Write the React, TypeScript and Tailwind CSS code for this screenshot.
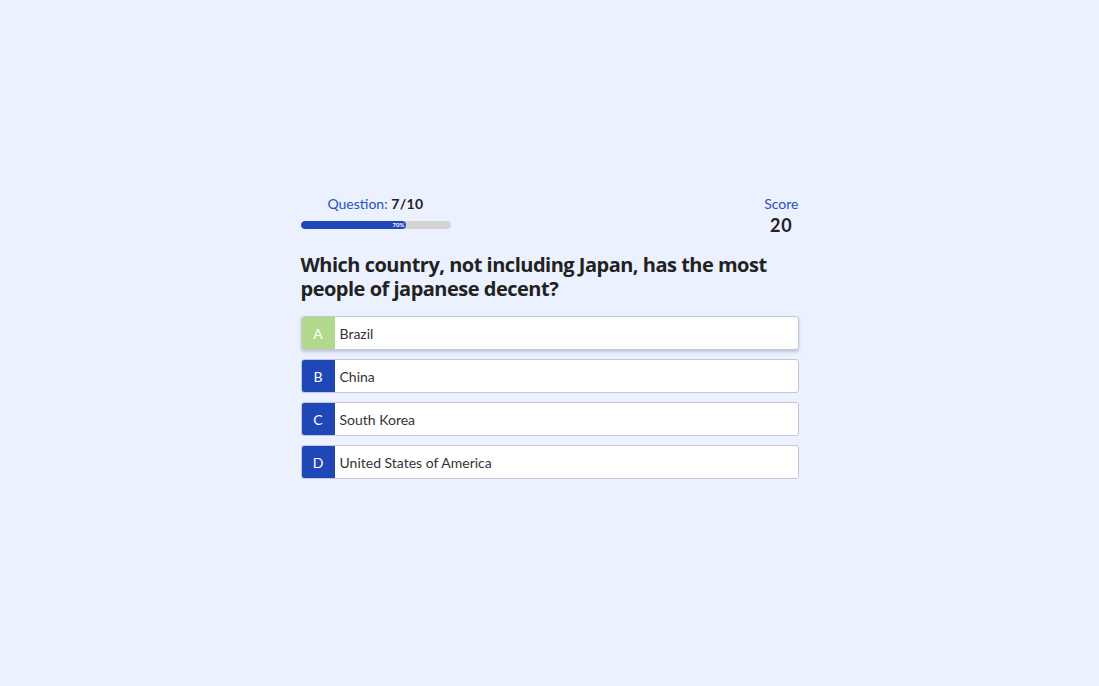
import React from 'react';

const options = [
  { letter: 'A', label: 'Brazil', selected: true },
  { letter: 'B', label: 'China', selected: false },
  { letter: 'C', label: 'South Korea', selected: false },
  { letter: 'D', label: 'United States of America', selected: false },
];

export default function App() {
  const progress = 70;
  return (
    <div
      className="min-h-screen w-full bg-[#ebf1fe] flex justify-center"
      style={{ fontFamily: 'Lato, "Open Sans", "Noto Sans", sans-serif' }}
    >
      <div className="w-[498px] pt-[195px]">
        {/* header */}
        <div className="flex justify-between items-start">
          <div className="w-[150px]">
            <p className="text-center text-[14px] leading-[18px] text-[#2a4fc0]">
              Question: <span className="font-bold text-[#222] tracking-wide">7/10</span>
            </p>
            <div className="mt-[8px] h-[8px] w-[150px] rounded-full bg-[#d4d4d4] overflow-hidden">
              <div
                className="h-full rounded-full bg-[#1f47b8] flex items-center justify-end pr-[1px]"
                style={{ width: `${progress}%` }}
              >
                <span className="text-[6px] leading-none font-bold text-white">{progress}%</span>
              </div>
            </div>
          </div>
          <div className="flex flex-col items-center">
            <p className="text-[14px] leading-[18px] text-[#2a4fc0]">Score</p>
            <p className="mt-[2px] text-[18px] leading-[20px] font-bold text-[#222] tracking-wider">20</p>
          </div>
        </div>

        {/* question */}
        <h1
          className="mt-[18px] text-[20px] leading-[24px] font-bold text-[#222] tracking-[-0.5px]"
          style={{ fontFamily: '"Open Sans", Lato, sans-serif' }}
        >
          Which country, not including Japan, has the most people of japanese decent?
        </h1>

        {/* options */}
        <div className="mt-[15px] flex flex-col gap-[9px]">
          {options.map(o => (
            <div
              key={o.letter}
              className={`flex h-[34px] rounded-[3px] border border-[#c4c7d4] bg-white overflow-hidden ${
                o.selected ? 'shadow-[0_2px_3px_rgba(60,70,110,0.25)]' : ''
              }`}
            >
              <div
                className={`w-[33px] flex items-center justify-center text-[14px] text-white ${
                  o.selected ? 'bg-[#b2d88c]' : 'bg-[#1f47b8]'
                }`}
              >
                {o.letter}
              </div>
              <div className="flex items-center pl-[5px] text-[14px] text-[#333]">{o.label}</div>
            </div>
          ))}
        </div>
      </div>
    </div>
  );
}
